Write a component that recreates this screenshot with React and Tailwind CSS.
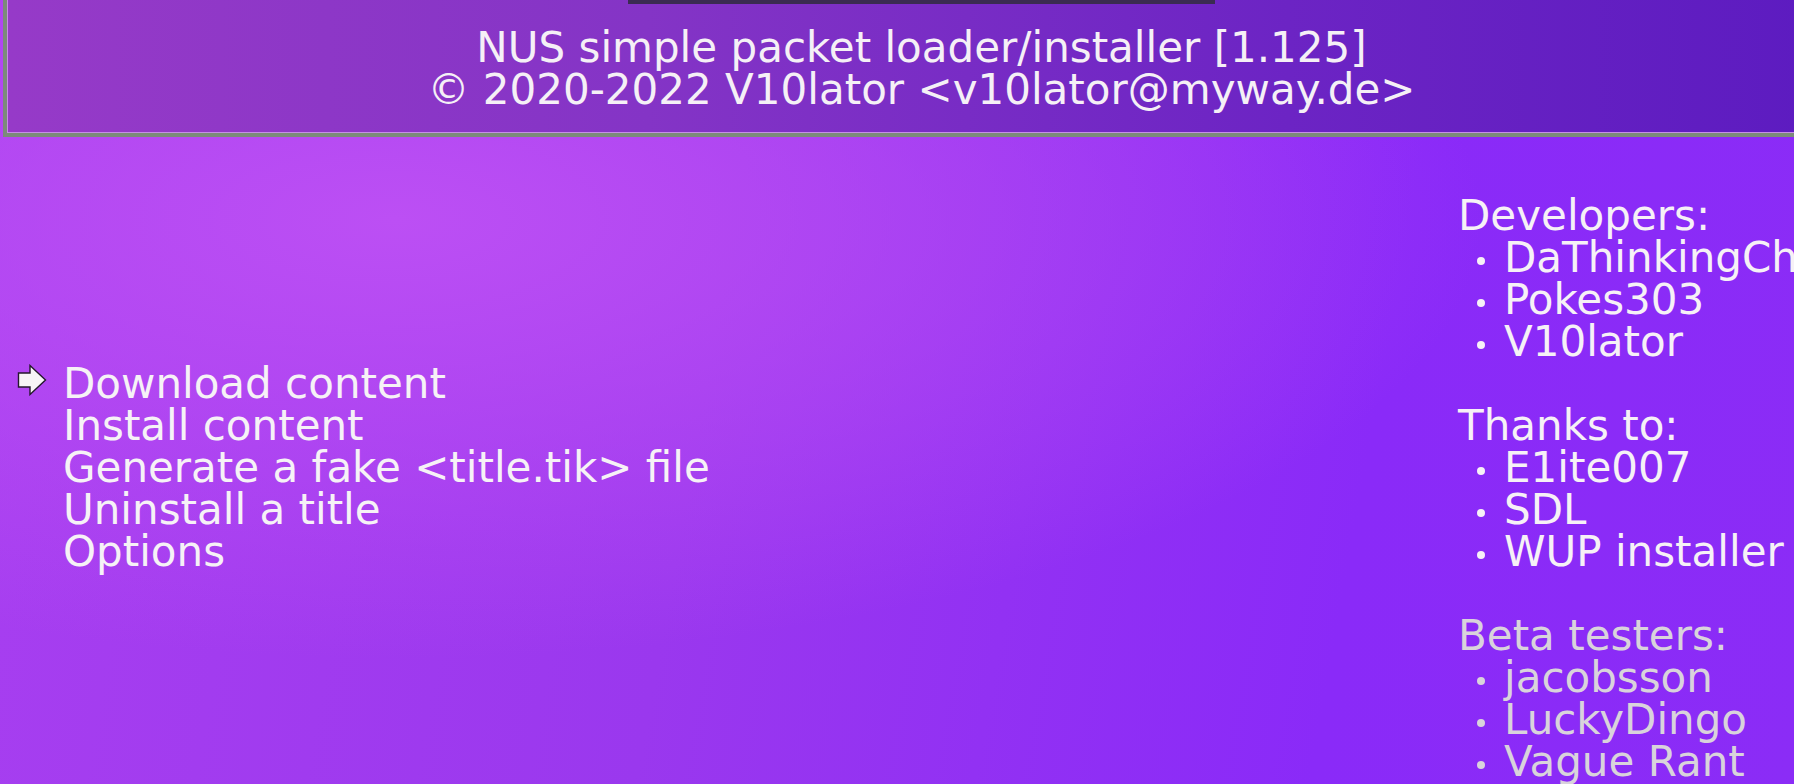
import React from "react";

const menu = [
  "Download content",
  "Install content",
  "Generate a fake <title.tik> file",
  "Uninstall a title",
  "Options",
];

const credits = [
  { title: "Developers:", names: ["DaThinkingChair", "Pokes303", "V10lator"], color: "text-[#f6f1f6]" },
  { title: "Thanks to:", names: ["E1ite007", "SDL", "WUP installer"], color: "text-[#f6f1f6]" },
  { title: "Beta testers:", names: ["jacobsson", "LuckyDingo", "Vague Rant"], color: "text-[#d9d3db]" },
];

function Arrow(){
  return (
    <svg width="30" height="32" viewBox="0 0 30 32" className="block">
      <polygon
        points="1.5,9 13,9 13,1.5 28.5,16 13,30.5 13,23 1.5,23"
        fill="#f7f4f7"
        stroke="#24182c"
        strokeWidth="1.4"
        strokeLinejoin="miter"
      />
    </svg>
  );
}

export default function App(){
  return (
    <div
      className="w-[1794px] h-[784px] overflow-hidden flex flex-col text-[42px] leading-[42px] bg-[radial-gradient(ellipse_at_22%_28%,#bc4ff4_0%,rgba(180,75,242,0)_55%),linear-gradient(100deg,#a83ff0_0%,#9a38ee_40%,#8a2af8_75%,#8b2cf6_100%)]"
      style={{ fontFamily: '"DejaVu Sans", sans-serif' }}
    >
      {/* header box */}
      <div className="ml-[3px] w-[1833px] h-[137px] shrink-0 border-l-4 border-b-4 border-[#7c8b7a] shadow-[inset_1px_-1px_0_#c58fe6] bg-[linear-gradient(to_right,#963ac8_0%,#8434c6_35%,#6c24c4_70%,#5c1bc0_100%)] flex flex-col items-center">
        <div className="w-[587px] h-[4px] bg-[#3b2b52]" />
        <div className="mt-[23px] text-[#f5f0f6] text-center">NUS simple packet loader/installer [1.125]</div>
        <div className="text-[#f5f0f6] text-center">© 2020-2022 V10lator &lt;v10lator@myway.de&gt;</div>
      </div>

      <div className="flex flex-1 items-start">
        {/* main menu */}
        <div className="w-[1458px] shrink-0 pt-[226px]">
          {menu.map((item, i) => (
            <div key={item} className="flex h-[42px]">
              <div className="w-[63px] pl-[17px] pt-[1px] shrink-0">
                {i === 0 && <Arrow />}
              </div>
              <div className="text-[#f6f2f6] whitespace-nowrap">{item}</div>
            </div>
          ))}
        </div>

        {/* credits */}
        <div className="pt-[58px] whitespace-nowrap">
          {credits.map((group, gi) => (
            <div key={group.title} className={`${group.color} ${gi > 0 ? "mt-[42px]" : ""}`}>
              <div className="h-[42px]">{group.title}</div>
              {group.names.map(n => (
                <div key={n} className="flex h-[42px]">
                  <div className="ml-[19px] mt-[20px] w-[8px] h-[8px] rounded-full bg-current shrink-0" />
                  <div className="ml-[19px]">{n}</div>
                </div>
              ))}
            </div>
          ))}
        </div>
      </div>
    </div>
  );
}
